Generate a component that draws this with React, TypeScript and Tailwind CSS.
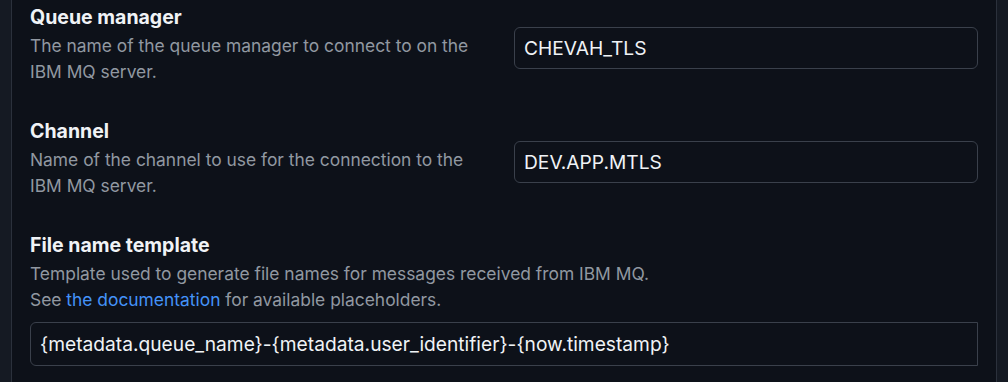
import React from 'react';

const fields = [
  {
    label: 'Queue manager',
    description: 'The name of the queue manager to connect to on the IBM MQ server.',
    value: 'CHEVAH_TLS',
  },
  {
    label: 'Channel',
    description: 'Name of the channel to use for the connection to the IBM MQ server.',
    value: 'DEV.APP.MTLS',
  },
];

export default function App() {
  return (
    <div className="w-[1008px] h-[382px] overflow-hidden bg-[#151a23] flex font-['Inter',sans-serif]">
      <div className="ml-[11px] w-[986px] h-full border-x border-[#2b313c] bg-[#0d1119] px-[18px] pt-[3px] flex flex-col gap-8">
        {fields.map((f) => (
          <div key={f.label} className="grid grid-cols-2 gap-5">
            <div>
              <h3 className="text-[19.5px] leading-7 font-bold text-[#f0f3f6]">{f.label}</h3>
              <p className="mt-0.5 text-[17.4px] leading-[26px] text-[#9198a1]">{f.description}</p>
            </div>
            <div className="pt-6">
              <div className="h-[42px] rounded-md border border-[#3a404b] bg-[#0d1119] flex items-center px-[9px] text-[19.2px] text-[#f0f3f6]">
                {f.value}
              </div>
            </div>
          </div>
        ))}

        <div>
          <h3 className="text-[19.5px] leading-7 font-bold text-[#f0f3f6]">File name template</h3>
          <p className="mt-0.5 text-[17.4px] leading-[26px] text-[#9198a1]">
            Template used to generate file names for messages received from IBM MQ.
            <br />
            See <a className="text-[#4493f8]">the documentation</a> for available placeholders.
          </p>
          <div className="mt-[9px] h-[44px] rounded-l-md border border-[#3a404b] bg-[#0d1119] flex items-center px-[9px] text-[19.2px] text-[#f0f3f6]">
            {'{metadata.queue_name}-{metadata.user_identifier}-{now.timestamp}'}
          </div>
        </div>
      </div>
    </div>
  );
}
